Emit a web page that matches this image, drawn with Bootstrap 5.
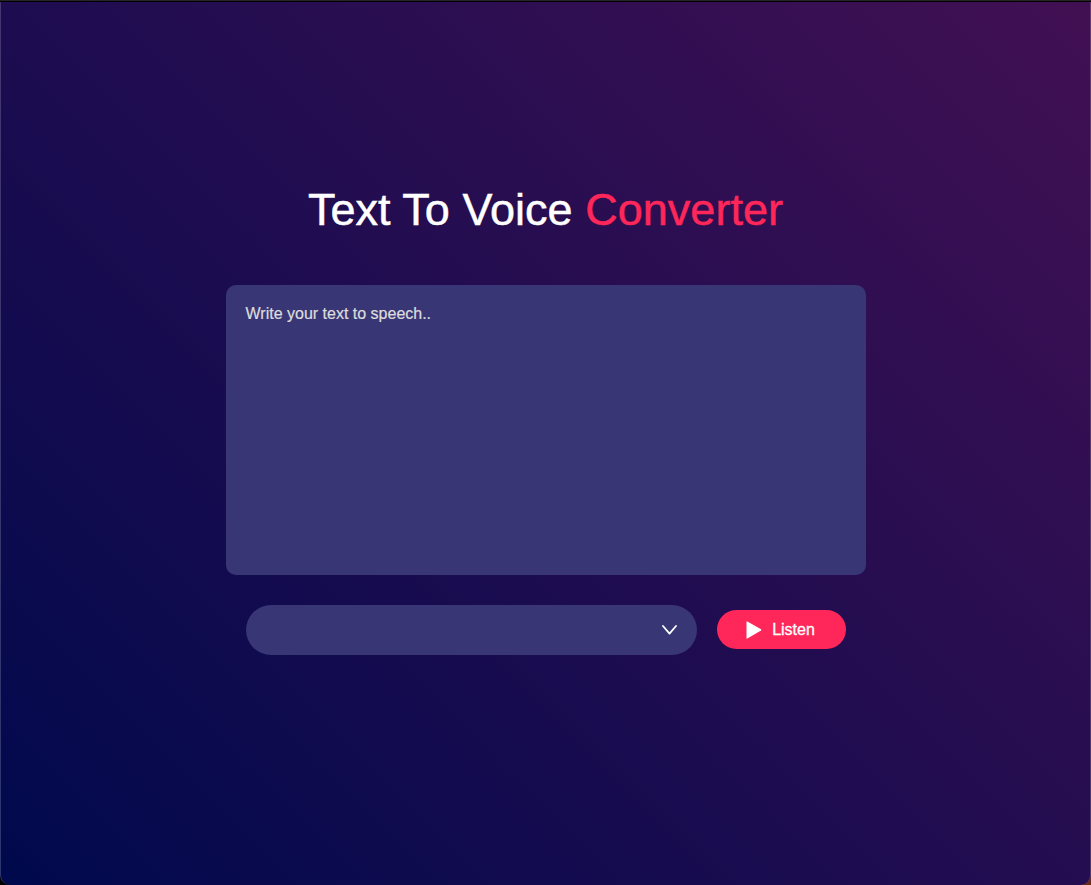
<!DOCTYPE html>
<html lang="en">
<head>
<meta charset="utf-8">
<meta name="viewport" content="width=device-width, initial-scale=1">
<title>Text To Voice Converter</title>
<link href="https://cdn.jsdelivr.net/npm/bootstrap@5.3.0/dist/css/bootstrap.min.css" rel="stylesheet">
<style>
  body { background: linear-gradient(90deg, #000 70%, #6b2a12); font-family: "Liberation Sans", Arial, sans-serif; }
  .window-edge { height: 2px; background: linear-gradient(#262424 50%, #000 50%); }
  .hero {
    background: linear-gradient(45deg, #00094d, #411053) border-box;
    border: 1px solid rgba(255, 255, 255, .18);
    border-width: 0 1px;
    border-radius: 0 0 10px 10px;
  }
  .converter { width: 640px; padding-bottom: 49px; }
  .title { font-size: 45px; line-height: 52px; letter-spacing: .03px; margin: 1px 0 49px; -webkit-text-stroke: .5px; }
  .accent { color: #ff2759; }
  .speech-text {
    height: 290px; padding: 20px; margin-bottom: 30px; resize: none;
    background: #393676; color: #fff; border-radius: 10px; font-size: 16px; line-height: 18px;
  }
  .speech-text:focus { background: #393676; color: #fff; box-shadow: none; }
  .speech-text::placeholder { color: #ddd; -webkit-text-stroke: .2px; }
  .controls { gap: 20px; padding: 0 20px; }
  .voice-select { height: 50px; background: #393676; padding-right: 20px; }
  .listen-btn, .listen-btn:hover {
    width: 129px; height: 39px; padding: 0 1px 0 0; margin-bottom: 1px; gap: 10px;
    background: #ff2759; color: #fff; border: 0; border-radius: 35px; font-size: 16px;
    -webkit-text-stroke: .3px;
  }
</style>
</head>
<body class="vh-100 d-flex flex-column overflow-hidden">
  <div class="window-edge flex-shrink-0"></div>
  <main class="hero flex-grow-1 d-flex align-items-center justify-content-center">
    <div class="converter">
      <h1 class="title text-white text-center fw-normal text-nowrap">Text To Voice <span class="accent">Converter</span></h1>
      <textarea class="speech-text form-control border-0" placeholder="Write your text to speech.."></textarea>
      <div class="controls d-flex align-items-center">
        <div class="voice-select flex-grow-1 rounded-pill d-flex align-items-center justify-content-end" role="combobox" aria-label="Voice" aria-expanded="false" tabindex="0">
          <svg width="15" height="10" viewBox="0 0 15 10" fill="none" stroke="#fff" stroke-width="1.8" stroke-linecap="round" stroke-linejoin="round"><path d="M1 1 7.5 8.6 14 1"/></svg>
        </div>
        <button type="button" class="listen-btn btn d-flex align-items-center justify-content-center">
          <svg width="16" height="18" viewBox="0 0 16 18" fill="#fff"><path d="M.5.9Q.5 0 1.4.4L15 8.3Q15.8 9 15 9.6L1.4 17.6Q.5 18 .5 17Z"/></svg>
          Listen
        </button>
      </div>
    </div>
  </main>
  <script src="https://cdn.jsdelivr.net/npm/bootstrap@5.3.0/dist/js/bootstrap.bundle.min.js"></script>
</body>
</html>
